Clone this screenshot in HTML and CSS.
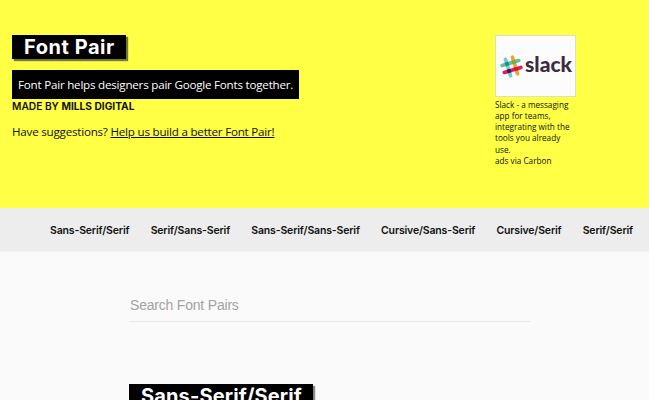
FILE: index.html
```html
<!DOCTYPE html>
<html lang="en">
<head>
<meta charset="utf-8">
<title>Font Pair</title>
<link rel="stylesheet" href="styles.css">
</head>
<body>
<header class="hero">
  <div class="intro">
    <h1 class="label brand">Font Pair</h1>
    <p class="tagline">Font Pair helps designers pair Google Fonts together.</p>
    <p class="credit">MADE BY <a href="#">MILLS DIGITAL</a></p>
    <p class="suggest">Have suggestions? <a href="#">Help us build a better Font Pair!</a></p>
  </div>
  <aside class="ad">
    <div class="ad-logo">
      <svg class="hash" viewBox="0 0 24 24" width="23" height="23" aria-hidden="true">
        <g transform="rotate(-17 12 12)" stroke-width="3.8" stroke-linecap="round" fill="none">
          <path d="M8.2 3v18" stroke="#70cadb"/>
          <path d="M15.8 3v18" stroke="#e9a820"/>
          <path d="M3 8.2h18" stroke="#3eb991" stroke-opacity=".85"/>
          <path d="M3 15.8h18" stroke="#e01765"/>
          <path d="M6.3 8.2h3.8" stroke="#258779" stroke-linecap="butt"/>
          <path d="M13.9 8.2h3.8" stroke="#91a23b" stroke-linecap="butt"/>
          <path d="M6.3 15.8h3.8" stroke="#35203b" stroke-linecap="butt"/>
          <path d="M13.9 15.8h3.8" stroke="#cc2027" stroke-linecap="butt"/>
        </g>
      </svg>
      <span class="wordmark">slack</span>
    </div>
    <p class="ad-text">Slack - a messaging app for teams, integrating with the tools you already use.</p>
    <p class="ad-text">ads via Carbon</p>
  </aside>
</header>
<nav class="nav">
  <a href="#">Sans-Serif/Serif</a>
  <a href="#">Serif/Sans-Serif</a>
  <a href="#">Sans-Serif/Sans-Serif</a>
  <a href="#">Cursive/Sans-Serif</a>
  <a href="#">Cursive/Serif</a>
  <a href="#">Serif/Serif</a>
</nav>
<main class="content">
  <input class="search" type="text" placeholder="Search Font Pairs">
  <h2 class="label section-title">Sans-Serif/Serif</h2>
</main>
</body>
</html>
```
FILE: styles.css
```css
* { box-sizing: border-box; }
html, body { margin: 0; height: 400px; overflow: hidden; }
body { background: #fafafa; color: #111; font-family: "Open Sans", sans-serif; }
h1, h2, p { margin: 0; }
a { color: inherit; }
.hero { display: flex; height: 208px; padding: 35px 0 0 12px; background: #ffff45; }
.intro { width: 483px; display: flex; flex-direction: column; align-items: flex-start; }
.label {
  background: #000; color: #fff; font-family: Inter, sans-serif; font-weight: 700;
  font-size: 20px; line-height: 24px; white-space: nowrap; padding-left: 12px;
  box-shadow: 2px 2px 1px #77773a;
}
.brand { width: 114px; height: 24px; letter-spacing: .55px; }
.tagline {
  margin-top: 11px; width: 287px; height: 29px; padding-left: 6px; background: #000; color: #fff;
  font-size: 11.6px; line-height: 29px; letter-spacing: -.21px; white-space: nowrap;
}
.credit { font: 600 10.2px/14px Inter, sans-serif; white-space: nowrap; }
.credit a { text-decoration: none; font-weight: 700; }
.suggest { margin-top: 10px; font-size: 11.6px; line-height: 17px; letter-spacing: -.21px; white-space: nowrap; }
.ad { width: 81px; }
.ad-logo {
  display: flex; align-items: center; height: 62px; margin-bottom: 2px; padding-left: 4px;
  background: #fcfcfc; border: 1px solid #dedec0;
}
.hash { flex: none; }
.wordmark { margin: -4px 0 0 2px; color: #3b2c42; font: 900 21px/24px Lato, sans-serif; }
.ad-text { width: 76px; font-size: 8.2px; line-height: 11.15px; }
.nav {
  display: flex; gap: 21.2px; height: 44px; padding: 0 0 0 50px; background: #ededed;
  border-bottom: 1px solid #f3f3f3; font: 600 10.5px/45px Inter, sans-serif; letter-spacing: -.16px;
  white-space: nowrap;
}
.nav a { text-decoration: none; }
.content { width: 402px; margin-left: 129px; padding-top: 36px; }
.search {
  display: block; width: 100%; height: 34px; padding: 1px 1px 0; border: 0; border-bottom: 1px solid #e9e9e9;
  background: none; outline: 0; font: 14px "Liberation Sans", sans-serif; letter-spacing: -.2px;
}
.search::placeholder { color: #a3a3a3; opacity: 1; }
.section-title { width: 184px; margin-top: 62px; letter-spacing: .15px; box-shadow: 2px 2px 1px #888; }
```
